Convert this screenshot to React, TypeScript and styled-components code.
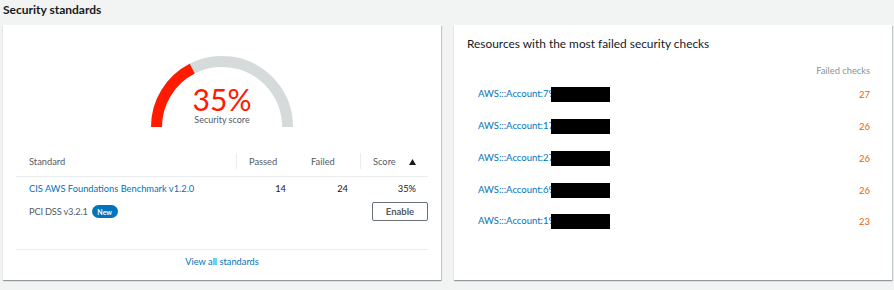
import styled, { createGlobalStyle } from 'styled-components'

const GlobalStyle = createGlobalStyle`
  html, body {
    margin: 0;
    padding: 0;
    background: #f2f3f3;
  }
  body {
    font-family: Lato, "Open Sans", Arial, sans-serif;
    color: #16191f;
  }
`

const Page = styled.div`
  width: 894px;
  height: 290px;
  padding: 0 2px 0 3px;
  box-sizing: border-box;
  overflow: hidden;
`

const Heading = styled.h2`
  margin: 0;
  height: 25px;
  padding-top: 2px;
  box-sizing: border-box;
  font-size: 12px;
  font-weight: 700;
  color: #16191f;
`

const Cards = styled.div`
  display: flex;
  gap: 13px;
`

const Card = styled.section`
  width: 438px;
  height: 255px;
  background: #fff;
  box-shadow: 0 1px 1px 0 rgba(0, 28, 36, 0.3), 1px 1px 1px 0 rgba(0, 28, 36, 0.15);
  box-sizing: border-box;
  display: flex;
  flex-direction: column;
`

const GaugeWrap = styled.div`
  position: relative;
  width: 142px;
  height: 71px;
  margin: 31px auto 0;
`

const GaugeLabel = styled.div`
  position: absolute;
  left: 0;
  right: 0;
  bottom: 1px;
  display: flex;
  flex-direction: column;
  align-items: center;
`

const Percent = styled.div`
  font-size: 30px;
  line-height: 28px;
  color: #ff1a00;
`

const ScoreCaption = styled.div`
  font-size: 9px;
  line-height: 12px;
  margin-top: 1px;
  color: #545b64;
`

const Table = styled.div`
  margin: 20px 13px 0;
  display: grid;
  grid-template-columns: 220px 62px 62px 68px;
  font-size: 9.3px;
`

const HeadCell = styled.div<{ $sep?: boolean }>`
  display: flex;
  align-items: center;
  justify-content: space-between;
  height: 29px;
  padding: 0 12px 0 13px;
  color: #545b64;
  border-bottom: 1px solid #eaeded;
  position: relative;
  &::before {
    content: '';
    display: ${p => (p.$sep ? 'block' : 'none')};
    position: absolute;
    left: 0;
    top: 6px;
    height: 16px;
    border-left: 1px solid #eaeded;
  }
`

const Cell = styled.div<{ $num?: boolean }>`
  display: flex;
  align-items: center;
  justify-content: ${p => (p.$num ? 'flex-end' : 'flex-start')};
  gap: 4px;
  height: 23px;
  padding: 0 12px 0 13px;
  color: #16191f;
`

const ButtonCell = styled(Cell)`
  padding: 0;
  justify-content: flex-end;
`

const Muted = styled.span`
  color: #545b64;
  letter-spacing: -0.2px;
`

const Link = styled.a`
  color: #0073bb;
  text-decoration: none;
`

const Badge = styled.span`
  display: inline-flex;
  align-items: center;
  justify-content: center;
  width: 26px;
  height: 13px;
  border-radius: 7px;
  background: #0073bb;
  color: #fff;
  font-size: 7px;
  font-weight: 700;
`

const Button = styled.button`
  width: 56px;
  height: 19px;
  border: 1px solid #687078;
  border-radius: 2px;
  background: #fff;
  color: #545b64;
  font-family: inherit;
  font-size: 9.5px;
  font-weight: 700;
  padding: 0;
`

const Footer = styled.div`
  margin: auto 13px 0;
  border-top: 1px solid #eaeded;
  height: 31px;
  box-sizing: border-box;
  padding-top: 6px;
  display: flex;
  justify-content: center;
  font-size: 9.3px;
  line-height: 12px;
`

const CardTitle = styled.h3`
  margin: 0;
  padding: 12px 13px 0;
  font-size: 11.9px;
  font-weight: 400;
  line-height: 14px;
  color: #16191f;
`

const ColHead = styled.div`
  padding: 14px 22px 0;
  text-align: right;
  font-size: 9.3px;
  color: #879596;
  line-height: 12px;
`

const ResourceList = styled.ul`
  list-style: none;
  margin: 2px 0 0;
  padding: 0 22px 0 24px;
`

const ResourceRow = styled.li`
  display: flex;
  align-items: center;
  justify-content: space-between;
  height: 31.75px;
  font-size: 9.5px;
`

const Redacted = styled.span`
  display: inline-block;
  width: 59px;
  height: 15px;
  background: #000;
  vertical-align: middle;
  margin-left: -3px;
`

const Count = styled.span`
  color: #eb5f07;
`

function Gauge({ value }: { value: number }) {
  const r = 65.5
  const cx = 71
  const cy = 71
  const a = Math.PI * (1 - value / 100)
  const ex = cx + r * Math.cos(a)
  const ey = cy - r * Math.sin(a)
  return (
    <GaugeWrap>
      <svg width="142" height="71" viewBox="0 0 142 71">
        <path d={`M ${cx - r} ${cy} A ${r} ${r} 0 0 1 ${cx + r} ${cy}`} fill="none" stroke="#d5dbdb" strokeWidth="11" />
        <path d={`M ${cx - r} ${cy} A ${r} ${r} 0 0 1 ${ex} ${ey}`} fill="none" stroke="#ff1a00" strokeWidth="11" />
      </svg>
      <GaugeLabel>
        <Percent>{value}%</Percent>
        <ScoreCaption>Security score</ScoreCaption>
      </GaugeLabel>
    </GaugeWrap>
  )
}

const resources = [
  { id: 'AWS:::Account:79', count: 27 },
  { id: 'AWS:::Account:17', count: 26 },
  { id: 'AWS:::Account:27', count: 26 },
  { id: 'AWS:::Account:69', count: 26 },
  { id: 'AWS:::Account:19', count: 23 },
]

export default function App() {
  return (
    <Page>
      <GlobalStyle />
      <Heading>Security standards</Heading>
      <Cards>
        <Card>
          <Gauge value={35} />
          <Table>
            <HeadCell>Standard</HeadCell>
            <HeadCell $sep>Passed</HeadCell>
            <HeadCell>Failed</HeadCell>
            <HeadCell $sep>
              Score
              <svg width="7" height="6" viewBox="0 0 7 6">
                <path d="M3.5 0 L7 6 L0 6 Z" fill="#16191f" />
              </svg>
            </HeadCell>

            <Cell>
              <Link href="#">CIS AWS Foundations Benchmark v1.2.0</Link>
            </Cell>
            <Cell $num>14</Cell>
            <Cell $num>24</Cell>
            <Cell $num>35%</Cell>

            <Cell>
              <Muted>PCI DSS v3.2.1</Muted>
              <Badge>New</Badge>
            </Cell>
            <Cell />
            <Cell />
            <ButtonCell>
              <Button>Enable</Button>
            </ButtonCell>
          </Table>
          <Footer>
            <Link href="#">View all standards</Link>
          </Footer>
        </Card>
        <Card>
          <CardTitle>Resources with the most failed security checks</CardTitle>
          <ColHead>Failed checks</ColHead>
          <ResourceList>
            {resources.map(r => (
              <ResourceRow key={r.id}>
                <span>
                  <Link href="#">{r.id}</Link>
                  <Redacted />
                </span>
                <Count>{r.count}</Count>
              </ResourceRow>
            ))}
          </ResourceList>
        </Card>
      </Cards>
    </Page>
  )
}
